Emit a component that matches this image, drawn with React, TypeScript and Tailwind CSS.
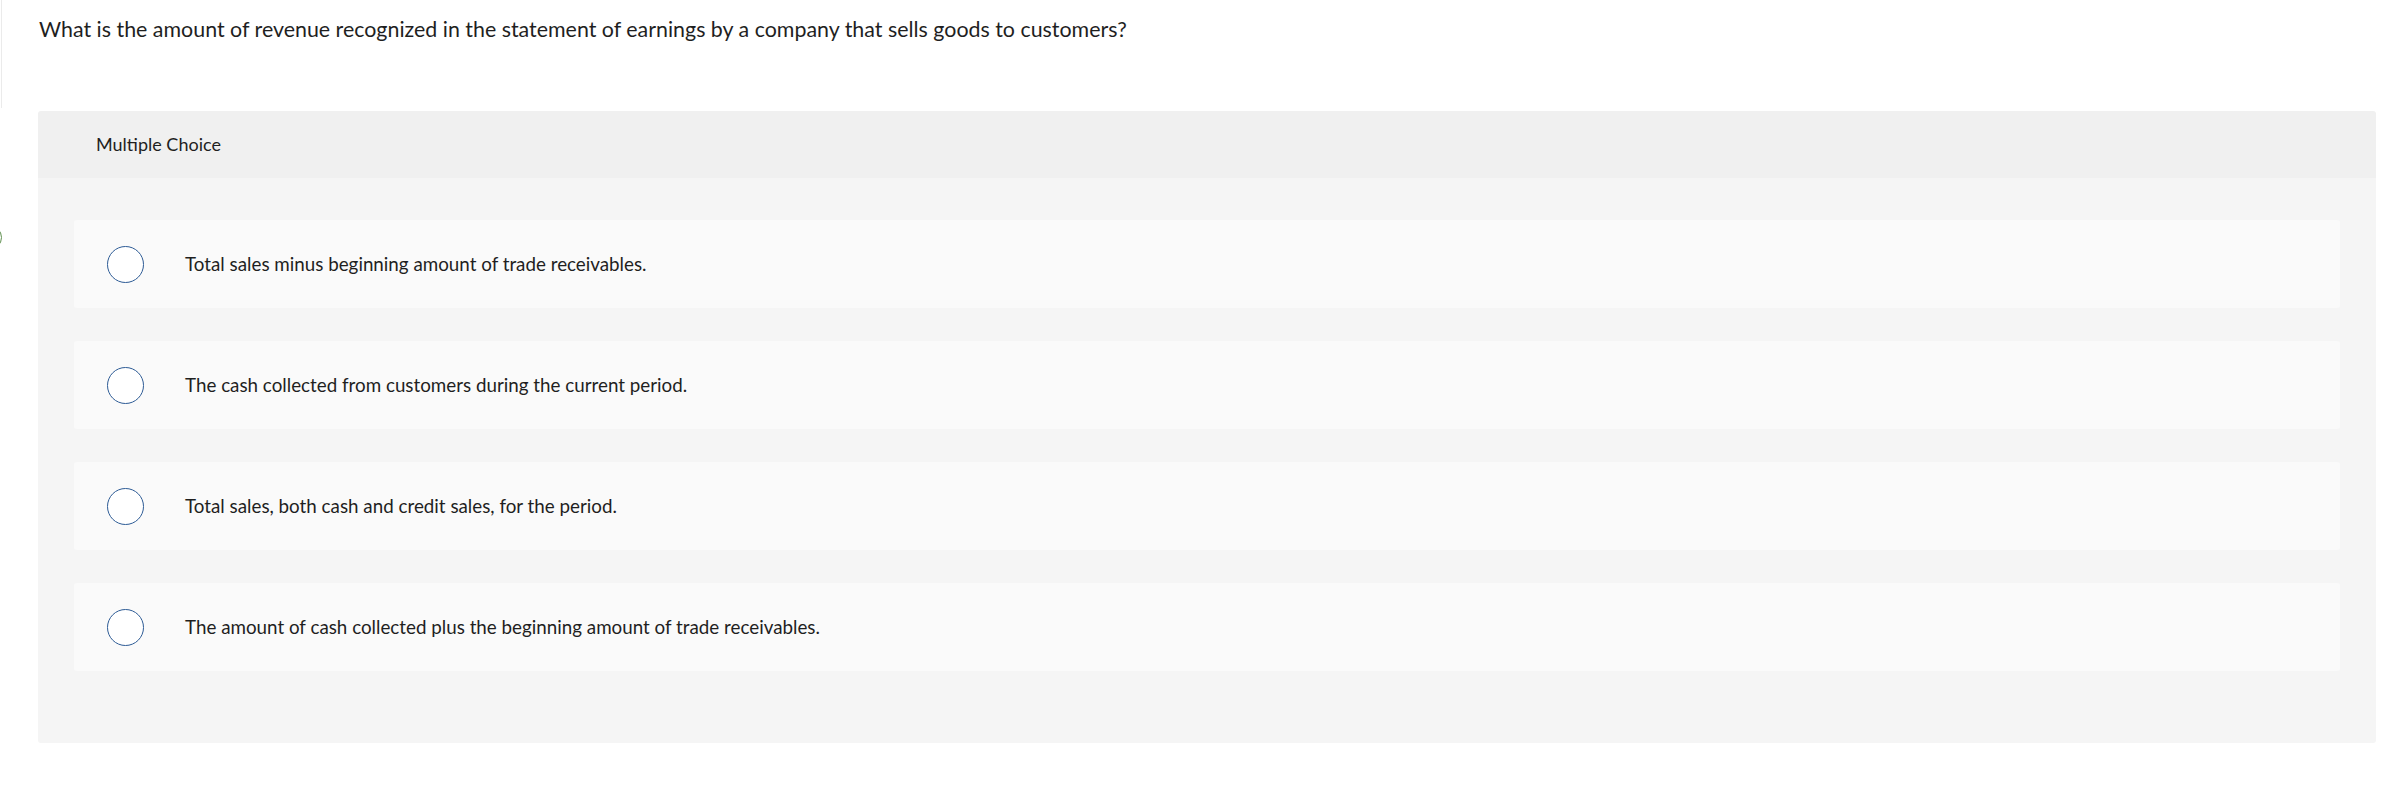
const options = [
  'Total sales minus beginning amount of trade receivables.',
  'The cash collected from customers during the current period.',
  'Total sales, both cash and credit sales, for the period.',
  'The amount of cash collected plus the beginning amount of trade receivables.',
];

function Radio() {
  return (
    <span className="block w-[37px] h-[37px] shrink-0 rounded-full border-[1.5px] border-[#2d5b95] bg-white" />
  );
}

export default function App() {
  return (
    <div
      className="relative h-[812px] w-full overflow-hidden bg-white text-[#1f1f1f]"
      style={{ fontFamily: 'Lato, "Open Sans", sans-serif' }}
    >
      {/* question */}
      <div className="ml-[1px] h-[108px] border-l border-[#ebebeb] pl-[37px] pt-[15px]">
        <p className="text-[21.4px] leading-[28px]">
          What is the amount of revenue recognized in the statement of earnings by a company that sells goods to customers?
        </p>
      </div>

      {/* left edge marker */}
      <span className="absolute left-[-23px] top-[225px] h-[25px] w-[25px] rounded-full border-[1.5px] border-[#5e8f4f]" />

      {/* answer box */}
      <div className="ml-[38px] mt-[3px] w-[2338px] overflow-hidden rounded-[3px]">
        <div className="flex h-[67px] items-center bg-[#f0f0f0] pl-[58px] text-[18px]">
          Multiple Choice
        </div>
        <div className="flex flex-col gap-[33px] bg-[#f5f5f5] px-[36px] pt-[42px] pb-[72px]">
          {options.map((opt) => (
            <div key={opt} className="flex h-[88px] items-center rounded-[3px] bg-[#fafafa] pl-[33px]">
              <Radio />
              <span className="ml-[41px] text-[18.8px]">{opt}</span>
            </div>
          ))}
        </div>
      </div>
    </div>
  );
}
